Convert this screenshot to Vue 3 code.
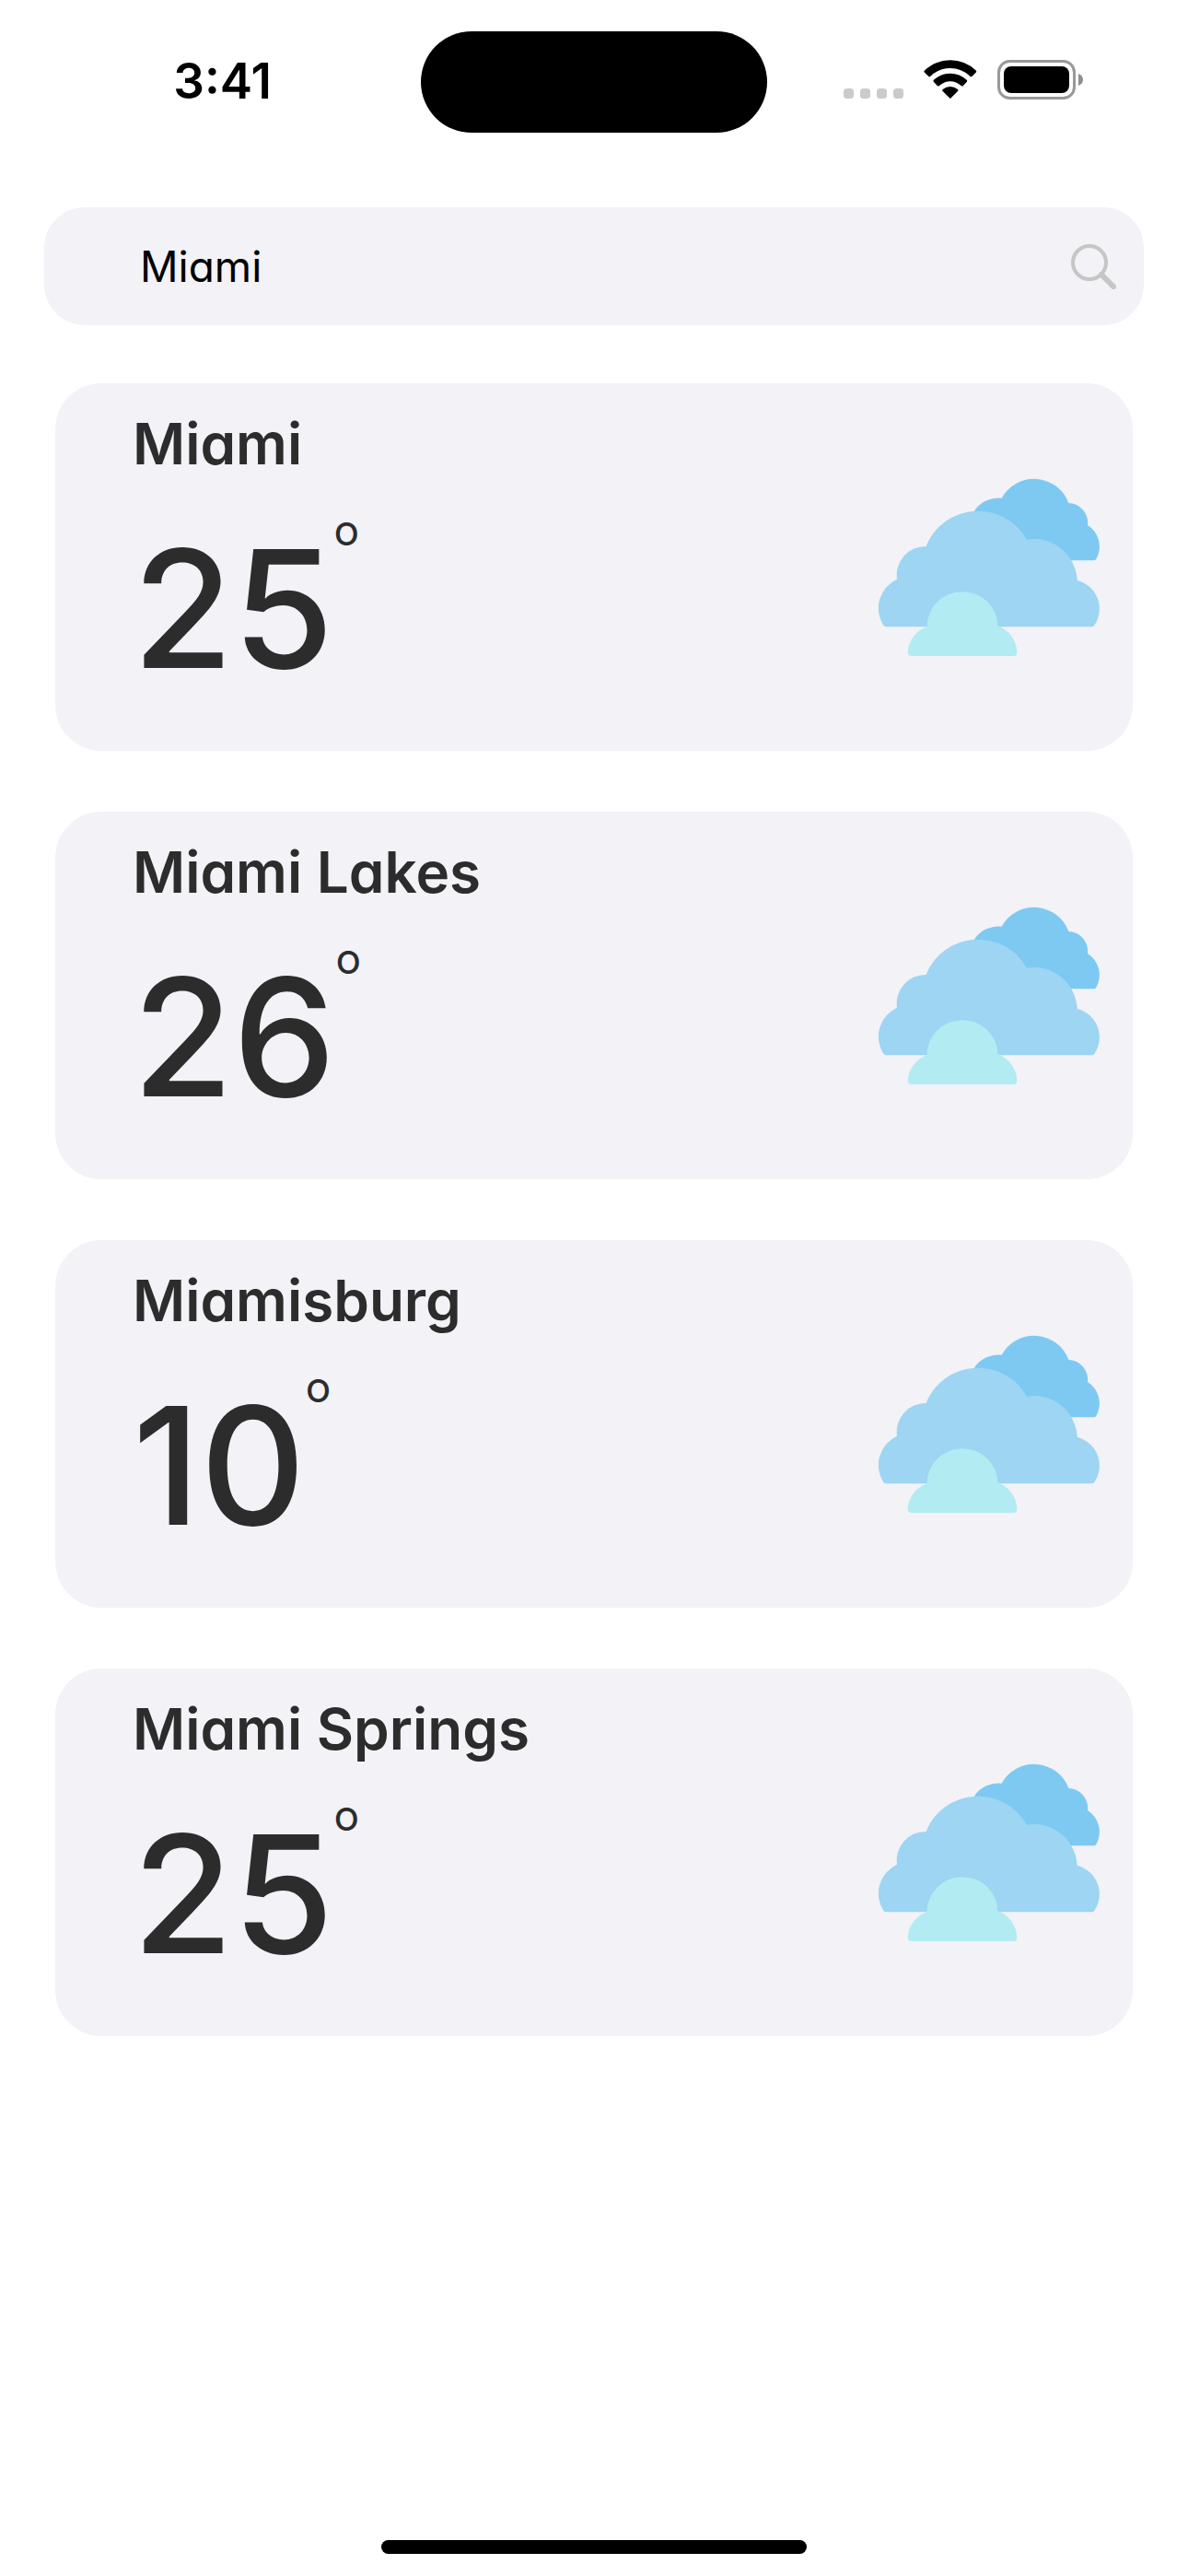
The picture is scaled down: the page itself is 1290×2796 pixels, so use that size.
<script setup>
import { ref } from 'vue'

const query = ref('Miami')

const results = [
  { city: 'Miami', temperature: 25 },
  { city: 'Miami Lakes', temperature: 26 },
  { city: 'Miamisburg', temperature: 10 },
  { city: 'Miami Springs', temperature: 25 },
]
</script>

<template>
  <div class="screen">
    <header class="status">
      <time class="clock">3:41</time>
      <div class="island"></div>
      <div class="indicators">
        <svg class="signal" width="65" height="11" viewBox="0 0 65 11" aria-hidden="true">
          <rect v-for="n in 4" :key="n" :x="(n - 1) * 18" y="0" width="11" height="11" rx="3.5" fill="#cbcbcb" />
        </svg>
        <svg class="wifi" width="58" height="42" viewBox="371 75 174 126" aria-hidden="true">
          <path d="M373 110Q371 113 374 116L387 129Q390 131 393 128Q421 102 457.5 102T522 128Q525 131 528 129L541 116Q544 113 542 110Q505 76 457.5 76T373 110Z" />
          <path d="M403 141Q401 144 404 147L416 160Q419 162 422 159Q438 145 457.5 145T493 159Q496 162 499 160L511 147Q514 144 512 141Q488 119 457.5 119T403 141Z" />
          <path d="M433 171Q430 174 433 177L455 199Q457.5 202 460 199L482 177Q485 174 482 171Q471 162 457.5 162T433 171Z" />
        </svg>
        <svg class="battery" width="94" height="43" viewBox="0 0 94 43" aria-hidden="true">
          <rect x="1.5" y="1.5" width="82" height="40" rx="12" fill="none" stroke="#999" stroke-width="3" />
          <rect x="7" y="7" width="71" height="29" rx="8" />
          <path d="M88 15Q93 17 93 21.500T88 28Z" fill="#8e8e8e" />
        </svg>
      </div>
    </header>

    <main class="content">
      <form class="search" role="search" @submit.prevent>
        <input v-model="query" class="field" type="text" aria-label="Search city" />
        <button class="submit" type="submit" aria-label="Search">
          <svg width="49" height="49" viewBox="0 0 49 49" aria-hidden="true">
            <circle cx="20" cy="20" r="18" fill="none" stroke="#c6c6c6" stroke-width="4" />
            <path d="M33 33L46 46" fill="none" stroke="#c6c6c6" stroke-width="6" stroke-linecap="round" />
          </svg>
        </button>
      </form>

      <ul class="results">
        <li v-for="item in results" :key="item.city" class="card">
          <div class="info">
            <h2 class="city">{{ item.city }}</h2>
            <p class="reading">
              <span class="value">{{ item.temperature }}</span>
              <span class="degree">o</span>
            </p>
          </div>
          <svg class="clouds" width="240" height="193" viewBox="102 87 720 579" role="img" aria-label="Cloudy">
            <path fill="#7dc9f2" d="M415 192A94 94 0 0 1 503 152A120 120 0 0 1 721 168A64 64 0 0 1 783 240A82 82 0 0 1 811 350Q808 355 803 355H600L415 250Z" />
            <path fill="#9dd5f2" d="M126 571Q121 571 117 565A104 104 0 0 1 162 416A94 94 0 0 1 257 309A182 182 0 0 1 585 287A141 141 0 0 1 749 420A95 95 0 0 1 805 566Q801 571 796 571Z" />
            <path fill="#b2ebf2" d="M208 666Q197 665 197 654A96 96 0 0 1 260 570A115 112 0 0 1 490 567A96 96 0 0 1 553 653Q554 666 542 666Z" />
          </svg>
        </li>
      </ul>
    </main>

    <footer class="home">
      <div class="home-bar"></div>
    </footer>
  </div>
</template>

<style>
body {
  background: #fff;
}
</style>

<style scoped>
.screen {
  display: flex;
  flex-direction: column;
  min-height: 100vh;
  font-family: Inter, "Open Sans", sans-serif;
  font-feature-settings: "cv11";
  color: #2c2c2c;
}

.status {
  display: grid;
  grid-template-columns: 1fr auto 1fr;
  align-items: center;
  padding-top: 34px;
  color: #000;
}

.clock {
  padding: 0 0 2px 26px;
  font-size: 53px;
  line-height: 64px;
  font-weight: 600;
  text-align: center;
}

.island {
  width: 376px;
  height: 110px;
  border-radius: 55px;
  background: #000;
}

.indicators {
  display: flex;
  justify-content: center;
  align-items: flex-end;
  gap: 22px;
  padding: 0 30px 6px 0;
}

.signal,
.wifi {
  margin-bottom: 1px;
}

.content {
  padding: 81px 48px 0;
}

.search {
  display: flex;
  align-items: center;
  height: 128px;
  padding: 0 24px 0 104px;
  border-radius: 44px;
  background: #f2f2f7;
}

.field {
  flex: 1;
  min-width: 0;
  padding: 0;
  border: 0;
  outline: 0;
  background: transparent;
  color: #000;
  font: inherit;
  font-feature-settings: inherit;
  font-size: 46px;
  line-height: 68px;
}

.submit {
  display: flex;
  padding: 0 6px;
  border: 0;
  background: transparent;
}

.results {
  display: flex;
  flex-direction: column;
  gap: 66px;
  margin: 63px 12px 0;
  padding: 0;
  list-style: none;
}

.card {
  display: flex;
  align-items: center;
  justify-content: space-between;
  padding: 21px 36px 44px 84px;
  border-radius: 50px;
  background: #f2f2f7;
}

.clouds {
  flex: none;
  margin-top: 23px;
}

.city {
  margin: 0 0 24px;
  font-size: 62px;
  line-height: 90px;
  font-weight: 600;
}

.reading {
  display: flex;
  align-items: flex-start;
  margin: 0;
}

.value {
  font-size: 177px;
  line-height: 220px;
  font-weight: 500;
}

.degree {
  font-size: 46px;
  line-height: 48px;
}

.home {
  display: flex;
  justify-content: center;
  margin-top: auto;
  padding: 24px 0;
}

.home-bar {
  width: 462px;
  height: 15px;
  border-radius: 8px;
  background: #000;
}
</style>
